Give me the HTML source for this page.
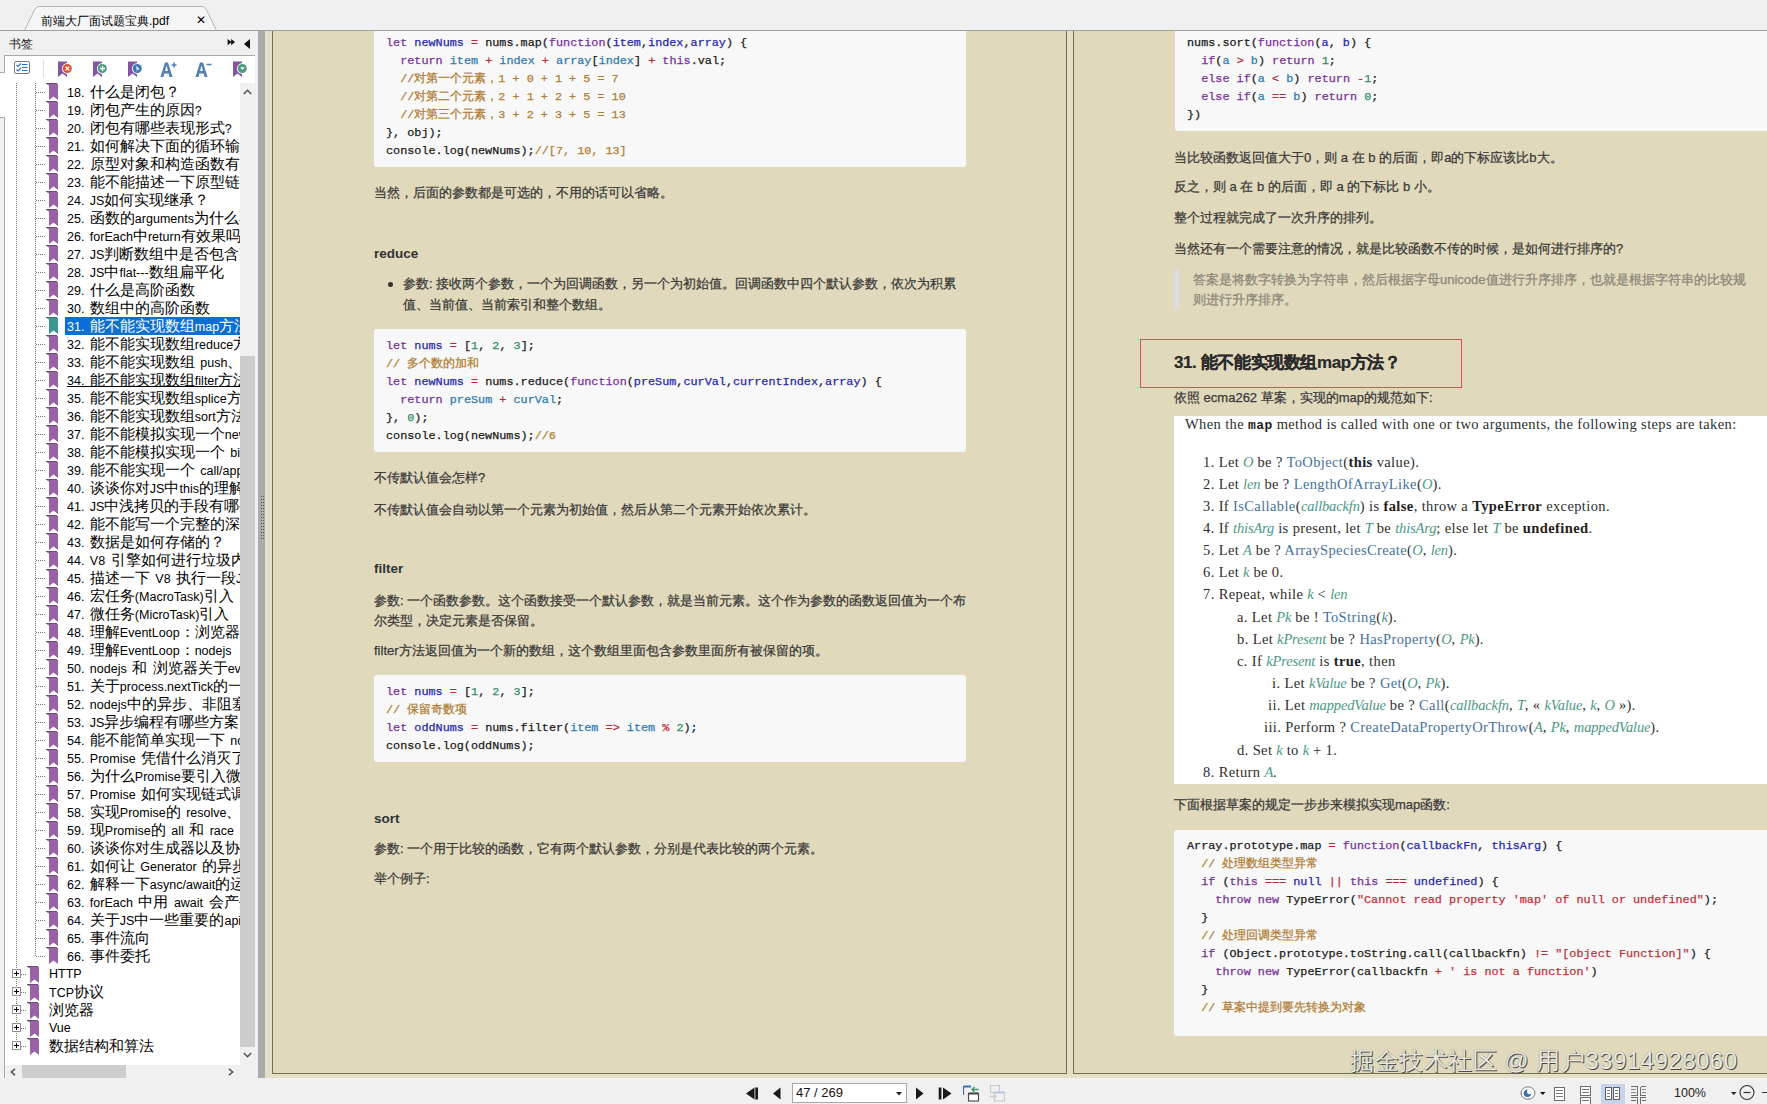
<!DOCTYPE html>
<html><head><meta charset="utf-8">
<style>
*{margin:0;padding:0;box-sizing:border-box}
html,body{width:1767px;height:1104px;overflow:hidden;background:#f0f0f0;font-family:"Liberation Sans",sans-serif;color:#000}
.abs{position:absolute}
#topline{position:absolute;left:0;top:30px;width:1767px;height:1px;background:#a0a0a0}
#tab{position:absolute;left:24px;top:6px;width:193px;height:25px}
#tabtxt{position:absolute;left:41px;top:13px;font-size:12px;color:#000;white-space:nowrap}
#tabx{position:absolute;left:196px;top:13px;font-size:12px}
#left{position:absolute;left:0;top:31px;width:258px;height:1047px;background:#f0f0f0;overflow:hidden}
#splitter{position:absolute;left:258px;top:31px;width:7px;height:1047px;background:#ababab}
#doc{position:absolute;left:265px;top:31px;width:1502px;height:1047px;background:#e4dfc6;overflow:hidden}
#bottom{position:absolute;left:0;top:1078px;width:1767px;height:26px;background:#f0f0f0}
/* panel */
#ptitle{position:absolute;left:9px;top:5px;font-size:12px;color:#222}
#pbox{position:absolute;left:4px;top:24px;width:251px;height:1023px;border-left:1px solid #a9a9a9;border-top:1px solid #a9a9a9;background:#fff}
#ptab{position:absolute;left:0;top:41px;width:5px;height:46px;border-top:1px solid #a9a9a9;border-bottom:1px solid #a9a9a9;background:#fff}
#treearea{position:absolute;left:5px;top:52px;width:235px;height:982px;background:#fff;overflow:hidden}
#tree{position:absolute;left:-5px;top:-83px;width:240px;height:1100px}
.ti{position:absolute;height:18px;line-height:18px;font-size:12.5px;color:#000;white-space:nowrap;padding-left:2px;padding-right:2px;word-spacing:2px}
.ti.sel{background:#0d6fd2;color:#fff;width:200px}
.ti.ul{text-decoration:underline}
.ti .c{font-size:14.8px;letter-spacing:0}
.hd{position:absolute;height:1px;background-image:linear-gradient(to right,#777 50%,transparent 50%);background-size:2px 1px}
.vd{position:absolute;width:1px;background-image:linear-gradient(to bottom,#777 50%,transparent 50%);background-size:1px 2px}
.pb{position:absolute;width:9px;height:9px;border:1px solid #919191;background:#fff}
.pb:before{content:"";position:absolute;left:1px;top:3px;width:5px;height:1px;background:#000}
.pb:after{content:"";position:absolute;left:3px;top:1px;width:1px;height:5px;background:#000}
#vscroll{position:absolute;left:240px;top:52px;width:15px;height:982px;background:#f0f0f0}
#hscroll{position:absolute;left:5px;top:1034px;width:250px;height:13px;background:#f0f0f0}
/* doc */
.page{position:absolute;background:#e0d9bb;border:1px solid #766f52}
.code{position:absolute;background:#f8f8f8;border-radius:3px;font-family:"Liberation Mono",monospace;font-size:11.8px;line-height:18px;color:#1a1a1a;white-space:pre}
.txt{position:absolute;font-size:13px;color:#3a3a3a;white-space:nowrap;line-height:20px}
.hb{font-weight:bold;font-size:13.5px;color:#2a2a2a}
.kw{color:#77309a}.vn{color:#2626b0}.op{color:#b82a3a}.pa{color:#2c78b0}.cm{color:#b07c32}.nu{color:#2e8a6a}.st{color:#c0303a}
.spec{position:absolute;font-family:"Liberation Serif",serif;font-size:14.5px;line-height:22px;color:#2e2e2e;white-space:nowrap;letter-spacing:0.38px}
.spec i{color:#4a9886;font-style:italic;letter-spacing:-0.15px}
.spec a{color:#44729e;text-decoration:none}
.spec b{font-weight:bold;color:#1e1e1e;letter-spacing:0.4px}
.spec .sm{font-family:"Liberation Mono",monospace;font-size:13px}
.wm{position:absolute;font-size:24px;letter-spacing:0.5px;color:#eae8de;white-space:nowrap;line-height:28px;text-shadow:1px 1px 0 #4a4a4a,0 0 1px #777}
.txt,.code{-webkit-text-stroke:0.25px currentColor}
.txt.hb{-webkit-text-stroke:0;color:#333}
</style></head>
<body>
<div id="tab"><svg width="193" height="25" style="position:absolute;left:0;top:0"><path d="M0.5 24.5 L11 3 Q12.5 0.5 15 0.5 L178 0.5 Q180.5 0.5 182 3 L192.5 24.5" fill="#f5f5f5" stroke="#b5b5b5"/></svg></div>
<div id="tabtxt">前端大厂面试题宝典.pdf</div>
<div id="tabx">✕</div>
<div id="topline"></div>
<div id="left">
 <div id="ptitle">书签</div>
 <svg class="abs" style="left:227px;top:8px" width="10" height="7" viewBox="0 0 10 8"><path d="M0 0 L4.5 3.5 L0 7Z M4 0 L8.5 3.5 L4 7Z" fill="#111"/></svg>
 <svg class="abs" style="left:244px;top:8px" width="7" height="10" viewBox="0 0 7 10"><path d="M6 0 L0 5 L6 10Z" fill="#111"/></svg>

 <div id="pbox"></div>
 <div id="ptab"></div>
 <div id="treearea"><div id="tree">
<div class="vd" style="left:35px;top:83px;height:873px"></div>
<div class="vd" style="left:16px;top:83px;height:962px"></div>
<div class="hd" style="left:36px;top:92px;width:10px"></div>
<svg class="abs" style="left:46px;top:83px" width="13" height="17" viewBox="0 0 13 17"><path d="M3 1 H12 V17 L7.5 13.5 L3 17 Z" fill="#9a62a6"/><path d="M0 0.5 H11" stroke="#6f4a7a" stroke-width="1"/><path d="M0.5 0.5 L3 2" stroke="#6f4a7a" stroke-width="1"/></svg>
<div class="ti" style="left:65px;top:83px">18. <span class="c">什么是闭包？</span></div>
<div class="hd" style="left:36px;top:110px;width:10px"></div>
<svg class="abs" style="left:46px;top:101px" width="13" height="17" viewBox="0 0 13 17"><path d="M3 1 H12 V17 L7.5 13.5 L3 17 Z" fill="#9a62a6"/><path d="M0 0.5 H11" stroke="#6f4a7a" stroke-width="1"/><path d="M0.5 0.5 L3 2" stroke="#6f4a7a" stroke-width="1"/></svg>
<div class="ti" style="left:65px;top:101px">19. <span class="c">闭包产生的原因</span>?</div>
<div class="hd" style="left:36px;top:128px;width:10px"></div>
<svg class="abs" style="left:46px;top:119px" width="13" height="17" viewBox="0 0 13 17"><path d="M3 1 H12 V17 L7.5 13.5 L3 17 Z" fill="#9a62a6"/><path d="M0 0.5 H11" stroke="#6f4a7a" stroke-width="1"/><path d="M0.5 0.5 L3 2" stroke="#6f4a7a" stroke-width="1"/></svg>
<div class="ti" style="left:65px;top:119px">20. <span class="c">闭包有哪些表现形式</span>?</div>
<div class="hd" style="left:36px;top:146px;width:10px"></div>
<svg class="abs" style="left:46px;top:137px" width="13" height="17" viewBox="0 0 13 17"><path d="M3 1 H12 V17 L7.5 13.5 L3 17 Z" fill="#9a62a6"/><path d="M0 0.5 H11" stroke="#6f4a7a" stroke-width="1"/><path d="M0.5 0.5 L3 2" stroke="#6f4a7a" stroke-width="1"/></svg>
<div class="ti" style="left:65px;top:137px">21. <span class="c">如何解决下面的循环输出问题？</span></div>
<div class="hd" style="left:36px;top:164px;width:10px"></div>
<svg class="abs" style="left:46px;top:155px" width="13" height="17" viewBox="0 0 13 17"><path d="M3 1 H12 V17 L7.5 13.5 L3 17 Z" fill="#9a62a6"/><path d="M0 0.5 H11" stroke="#6f4a7a" stroke-width="1"/><path d="M0.5 0.5 L3 2" stroke="#6f4a7a" stroke-width="1"/></svg>
<div class="ti" style="left:65px;top:155px">22. <span class="c">原型对象和构造函数有何关系？</span></div>
<div class="hd" style="left:36px;top:182px;width:10px"></div>
<svg class="abs" style="left:46px;top:173px" width="13" height="17" viewBox="0 0 13 17"><path d="M3 1 H12 V17 L7.5 13.5 L3 17 Z" fill="#9a62a6"/><path d="M0 0.5 H11" stroke="#6f4a7a" stroke-width="1"/><path d="M0.5 0.5 L3 2" stroke="#6f4a7a" stroke-width="1"/></svg>
<div class="ti" style="left:65px;top:173px">23. <span class="c">能不能描述一下原型链？</span></div>
<div class="hd" style="left:36px;top:200px;width:10px"></div>
<svg class="abs" style="left:46px;top:191px" width="13" height="17" viewBox="0 0 13 17"><path d="M3 1 H12 V17 L7.5 13.5 L3 17 Z" fill="#9a62a6"/><path d="M0 0.5 H11" stroke="#6f4a7a" stroke-width="1"/><path d="M0.5 0.5 L3 2" stroke="#6f4a7a" stroke-width="1"/></svg>
<div class="ti" style="left:65px;top:191px">24. JS<span class="c">如何实现继承？</span></div>
<div class="hd" style="left:36px;top:218px;width:10px"></div>
<svg class="abs" style="left:46px;top:209px" width="13" height="17" viewBox="0 0 13 17"><path d="M3 1 H12 V17 L7.5 13.5 L3 17 Z" fill="#9a62a6"/><path d="M0 0.5 H11" stroke="#6f4a7a" stroke-width="1"/><path d="M0.5 0.5 L3 2" stroke="#6f4a7a" stroke-width="1"/></svg>
<div class="ti" style="left:65px;top:209px">25. <span class="c">函数的</span>arguments<span class="c">为什么不是数组？</span></div>
<div class="hd" style="left:36px;top:236px;width:10px"></div>
<svg class="abs" style="left:46px;top:227px" width="13" height="17" viewBox="0 0 13 17"><path d="M3 1 H12 V17 L7.5 13.5 L3 17 Z" fill="#9a62a6"/><path d="M0 0.5 H11" stroke="#6f4a7a" stroke-width="1"/><path d="M0.5 0.5 L3 2" stroke="#6f4a7a" stroke-width="1"/></svg>
<div class="ti" style="left:65px;top:227px">26. forEach<span class="c">中</span>return<span class="c">有效果吗？</span></div>
<div class="hd" style="left:36px;top:254px;width:10px"></div>
<svg class="abs" style="left:46px;top:245px" width="13" height="17" viewBox="0 0 13 17"><path d="M3 1 H12 V17 L7.5 13.5 L3 17 Z" fill="#9a62a6"/><path d="M0 0.5 H11" stroke="#6f4a7a" stroke-width="1"/><path d="M0.5 0.5 L3 2" stroke="#6f4a7a" stroke-width="1"/></svg>
<div class="ti" style="left:65px;top:245px">27. JS<span class="c">判断数组中是否包含某个值</span></div>
<div class="hd" style="left:36px;top:272px;width:10px"></div>
<svg class="abs" style="left:46px;top:263px" width="13" height="17" viewBox="0 0 13 17"><path d="M3 1 H12 V17 L7.5 13.5 L3 17 Z" fill="#9a62a6"/><path d="M0 0.5 H11" stroke="#6f4a7a" stroke-width="1"/><path d="M0.5 0.5 L3 2" stroke="#6f4a7a" stroke-width="1"/></svg>
<div class="ti" style="left:65px;top:263px">28. JS<span class="c">中</span>flat---<span class="c">数组扁平化</span></div>
<div class="hd" style="left:36px;top:290px;width:10px"></div>
<svg class="abs" style="left:46px;top:281px" width="13" height="17" viewBox="0 0 13 17"><path d="M3 1 H12 V17 L7.5 13.5 L3 17 Z" fill="#9a62a6"/><path d="M0 0.5 H11" stroke="#6f4a7a" stroke-width="1"/><path d="M0.5 0.5 L3 2" stroke="#6f4a7a" stroke-width="1"/></svg>
<div class="ti" style="left:65px;top:281px">29. <span class="c">什么是高阶函数</span></div>
<div class="hd" style="left:36px;top:308px;width:10px"></div>
<svg class="abs" style="left:46px;top:299px" width="13" height="17" viewBox="0 0 13 17"><path d="M3 1 H12 V17 L7.5 13.5 L3 17 Z" fill="#9a62a6"/><path d="M0 0.5 H11" stroke="#6f4a7a" stroke-width="1"/><path d="M0.5 0.5 L3 2" stroke="#6f4a7a" stroke-width="1"/></svg>
<div class="ti" style="left:65px;top:299px">30. <span class="c">数组中的高阶函数</span></div>
<div class="hd" style="left:36px;top:326px;width:10px"></div>
<svg class="abs" style="left:46px;top:317px" width="13" height="17" viewBox="0 0 13 17"><path d="M3 1 H12 V17 L7.5 13.5 L3 17 Z" fill="#3a9890"/><path d="M0 0.5 H11" stroke="#2b7a72" stroke-width="1"/><path d="M0.5 0.5 L3 2" stroke="#2b7a72" stroke-width="1"/></svg>
<div class="ti sel" style="left:65px;top:317px">31. <span class="c">能不能实现数组</span>map<span class="c">方法？</span></div>
<div class="hd" style="left:36px;top:344px;width:10px"></div>
<svg class="abs" style="left:46px;top:335px" width="13" height="17" viewBox="0 0 13 17"><path d="M3 1 H12 V17 L7.5 13.5 L3 17 Z" fill="#9a62a6"/><path d="M0 0.5 H11" stroke="#6f4a7a" stroke-width="1"/><path d="M0.5 0.5 L3 2" stroke="#6f4a7a" stroke-width="1"/></svg>
<div class="ti" style="left:65px;top:335px">32. <span class="c">能不能实现数组</span>reduce<span class="c">方法？</span></div>
<div class="hd" style="left:36px;top:362px;width:10px"></div>
<svg class="abs" style="left:46px;top:353px" width="13" height="17" viewBox="0 0 13 17"><path d="M3 1 H12 V17 L7.5 13.5 L3 17 Z" fill="#9a62a6"/><path d="M0 0.5 H11" stroke="#6f4a7a" stroke-width="1"/><path d="M0.5 0.5 L3 2" stroke="#6f4a7a" stroke-width="1"/></svg>
<div class="ti" style="left:65px;top:353px">33. <span class="c">能不能实现数组</span> push<span class="c">、</span>pop <span class="c">方法？</span></div>
<div class="hd" style="left:36px;top:380px;width:10px"></div>
<svg class="abs" style="left:46px;top:371px" width="13" height="17" viewBox="0 0 13 17"><path d="M3 1 H12 V17 L7.5 13.5 L3 17 Z" fill="#9a62a6"/><path d="M0 0.5 H11" stroke="#6f4a7a" stroke-width="1"/><path d="M0.5 0.5 L3 2" stroke="#6f4a7a" stroke-width="1"/></svg>
<div class="ti ul" style="left:65px;top:371px">34. <span class="c">能不能实现数组</span>filter<span class="c">方法？</span></div>
<div class="hd" style="left:36px;top:398px;width:10px"></div>
<svg class="abs" style="left:46px;top:389px" width="13" height="17" viewBox="0 0 13 17"><path d="M3 1 H12 V17 L7.5 13.5 L3 17 Z" fill="#9a62a6"/><path d="M0 0.5 H11" stroke="#6f4a7a" stroke-width="1"/><path d="M0.5 0.5 L3 2" stroke="#6f4a7a" stroke-width="1"/></svg>
<div class="ti" style="left:65px;top:389px">35. <span class="c">能不能实现数组</span>splice<span class="c">方法？</span></div>
<div class="hd" style="left:36px;top:416px;width:10px"></div>
<svg class="abs" style="left:46px;top:407px" width="13" height="17" viewBox="0 0 13 17"><path d="M3 1 H12 V17 L7.5 13.5 L3 17 Z" fill="#9a62a6"/><path d="M0 0.5 H11" stroke="#6f4a7a" stroke-width="1"/><path d="M0.5 0.5 L3 2" stroke="#6f4a7a" stroke-width="1"/></svg>
<div class="ti" style="left:65px;top:407px">36. <span class="c">能不能实现数组</span>sort<span class="c">方法？</span></div>
<div class="hd" style="left:36px;top:434px;width:10px"></div>
<svg class="abs" style="left:46px;top:425px" width="13" height="17" viewBox="0 0 13 17"><path d="M3 1 H12 V17 L7.5 13.5 L3 17 Z" fill="#9a62a6"/><path d="M0 0.5 H11" stroke="#6f4a7a" stroke-width="1"/><path d="M0.5 0.5 L3 2" stroke="#6f4a7a" stroke-width="1"/></svg>
<div class="ti" style="left:65px;top:425px">37. <span class="c">能不能模拟实现一个</span>new<span class="c">的效果？</span></div>
<div class="hd" style="left:36px;top:452px;width:10px"></div>
<svg class="abs" style="left:46px;top:443px" width="13" height="17" viewBox="0 0 13 17"><path d="M3 1 H12 V17 L7.5 13.5 L3 17 Z" fill="#9a62a6"/><path d="M0 0.5 H11" stroke="#6f4a7a" stroke-width="1"/><path d="M0.5 0.5 L3 2" stroke="#6f4a7a" stroke-width="1"/></svg>
<div class="ti" style="left:65px;top:443px">38. <span class="c">能不能模拟实现一个</span> bind <span class="c">的效果？</span></div>
<div class="hd" style="left:36px;top:470px;width:10px"></div>
<svg class="abs" style="left:46px;top:461px" width="13" height="17" viewBox="0 0 13 17"><path d="M3 1 H12 V17 L7.5 13.5 L3 17 Z" fill="#9a62a6"/><path d="M0 0.5 H11" stroke="#6f4a7a" stroke-width="1"/><path d="M0.5 0.5 L3 2" stroke="#6f4a7a" stroke-width="1"/></svg>
<div class="ti" style="left:65px;top:461px">39. <span class="c">能不能实现一个</span> call/apply <span class="c">函数？</span></div>
<div class="hd" style="left:36px;top:488px;width:10px"></div>
<svg class="abs" style="left:46px;top:479px" width="13" height="17" viewBox="0 0 13 17"><path d="M3 1 H12 V17 L7.5 13.5 L3 17 Z" fill="#9a62a6"/><path d="M0 0.5 H11" stroke="#6f4a7a" stroke-width="1"/><path d="M0.5 0.5 L3 2" stroke="#6f4a7a" stroke-width="1"/></svg>
<div class="ti" style="left:65px;top:479px">40. <span class="c">谈谈你对</span>JS<span class="c">中</span>this<span class="c">的理解</span></div>
<div class="hd" style="left:36px;top:506px;width:10px"></div>
<svg class="abs" style="left:46px;top:497px" width="13" height="17" viewBox="0 0 13 17"><path d="M3 1 H12 V17 L7.5 13.5 L3 17 Z" fill="#9a62a6"/><path d="M0 0.5 H11" stroke="#6f4a7a" stroke-width="1"/><path d="M0.5 0.5 L3 2" stroke="#6f4a7a" stroke-width="1"/></svg>
<div class="ti" style="left:65px;top:497px">41. JS<span class="c">中浅拷贝的手段有哪些？</span></div>
<div class="hd" style="left:36px;top:524px;width:10px"></div>
<svg class="abs" style="left:46px;top:515px" width="13" height="17" viewBox="0 0 13 17"><path d="M3 1 H12 V17 L7.5 13.5 L3 17 Z" fill="#9a62a6"/><path d="M0 0.5 H11" stroke="#6f4a7a" stroke-width="1"/><path d="M0.5 0.5 L3 2" stroke="#6f4a7a" stroke-width="1"/></svg>
<div class="ti" style="left:65px;top:515px">42. <span class="c">能不能写一个完整的深拷贝？</span></div>
<div class="hd" style="left:36px;top:542px;width:10px"></div>
<svg class="abs" style="left:46px;top:533px" width="13" height="17" viewBox="0 0 13 17"><path d="M3 1 H12 V17 L7.5 13.5 L3 17 Z" fill="#9a62a6"/><path d="M0 0.5 H11" stroke="#6f4a7a" stroke-width="1"/><path d="M0.5 0.5 L3 2" stroke="#6f4a7a" stroke-width="1"/></svg>
<div class="ti" style="left:65px;top:533px">43. <span class="c">数据是如何存储的？</span></div>
<div class="hd" style="left:36px;top:560px;width:10px"></div>
<svg class="abs" style="left:46px;top:551px" width="13" height="17" viewBox="0 0 13 17"><path d="M3 1 H12 V17 L7.5 13.5 L3 17 Z" fill="#9a62a6"/><path d="M0 0.5 H11" stroke="#6f4a7a" stroke-width="1"/><path d="M0.5 0.5 L3 2" stroke="#6f4a7a" stroke-width="1"/></svg>
<div class="ti" style="left:65px;top:551px">44. V8 <span class="c">引擎如何进行垃圾内存的回收？</span></div>
<div class="hd" style="left:36px;top:578px;width:10px"></div>
<svg class="abs" style="left:46px;top:569px" width="13" height="17" viewBox="0 0 13 17"><path d="M3 1 H12 V17 L7.5 13.5 L3 17 Z" fill="#9a62a6"/><path d="M0 0.5 H11" stroke="#6f4a7a" stroke-width="1"/><path d="M0.5 0.5 L3 2" stroke="#6f4a7a" stroke-width="1"/></svg>
<div class="ti" style="left:65px;top:569px">45. <span class="c">描述一下</span> V8 <span class="c">执行一段</span>JS<span class="c">代码的过程？</span></div>
<div class="hd" style="left:36px;top:596px;width:10px"></div>
<svg class="abs" style="left:46px;top:587px" width="13" height="17" viewBox="0 0 13 17"><path d="M3 1 H12 V17 L7.5 13.5 L3 17 Z" fill="#9a62a6"/><path d="M0 0.5 H11" stroke="#6f4a7a" stroke-width="1"/><path d="M0.5 0.5 L3 2" stroke="#6f4a7a" stroke-width="1"/></svg>
<div class="ti" style="left:65px;top:587px">46. <span class="c">宏任务</span>(MacroTask)<span class="c">引入</span></div>
<div class="hd" style="left:36px;top:614px;width:10px"></div>
<svg class="abs" style="left:46px;top:605px" width="13" height="17" viewBox="0 0 13 17"><path d="M3 1 H12 V17 L7.5 13.5 L3 17 Z" fill="#9a62a6"/><path d="M0 0.5 H11" stroke="#6f4a7a" stroke-width="1"/><path d="M0.5 0.5 L3 2" stroke="#6f4a7a" stroke-width="1"/></svg>
<div class="ti" style="left:65px;top:605px">47. <span class="c">微任务</span>(MicroTask)<span class="c">引入</span></div>
<div class="hd" style="left:36px;top:632px;width:10px"></div>
<svg class="abs" style="left:46px;top:623px" width="13" height="17" viewBox="0 0 13 17"><path d="M3 1 H12 V17 L7.5 13.5 L3 17 Z" fill="#9a62a6"/><path d="M0 0.5 H11" stroke="#6f4a7a" stroke-width="1"/><path d="M0.5 0.5 L3 2" stroke="#6f4a7a" stroke-width="1"/></svg>
<div class="ti" style="left:65px;top:623px">48. <span class="c">理解</span>EventLoop<span class="c">：浏览器</span></div>
<div class="hd" style="left:36px;top:650px;width:10px"></div>
<svg class="abs" style="left:46px;top:641px" width="13" height="17" viewBox="0 0 13 17"><path d="M3 1 H12 V17 L7.5 13.5 L3 17 Z" fill="#9a62a6"/><path d="M0 0.5 H11" stroke="#6f4a7a" stroke-width="1"/><path d="M0.5 0.5 L3 2" stroke="#6f4a7a" stroke-width="1"/></svg>
<div class="ti" style="left:65px;top:641px">49. <span class="c">理解</span>EventLoop<span class="c">：</span>nodejs</div>
<div class="hd" style="left:36px;top:668px;width:10px"></div>
<svg class="abs" style="left:46px;top:659px" width="13" height="17" viewBox="0 0 13 17"><path d="M3 1 H12 V17 L7.5 13.5 L3 17 Z" fill="#9a62a6"/><path d="M0 0.5 H11" stroke="#6f4a7a" stroke-width="1"/><path d="M0.5 0.5 L3 2" stroke="#6f4a7a" stroke-width="1"/></svg>
<div class="ti" style="left:65px;top:659px">50. nodejs <span class="c">和</span> <span class="c">浏览器关于</span>eventLoop<span class="c">的主要区别</span></div>
<div class="hd" style="left:36px;top:686px;width:10px"></div>
<svg class="abs" style="left:46px;top:677px" width="13" height="17" viewBox="0 0 13 17"><path d="M3 1 H12 V17 L7.5 13.5 L3 17 Z" fill="#9a62a6"/><path d="M0 0.5 H11" stroke="#6f4a7a" stroke-width="1"/><path d="M0.5 0.5 L3 2" stroke="#6f4a7a" stroke-width="1"/></svg>
<div class="ti" style="left:65px;top:677px">51. <span class="c">关于</span>process.nextTick<span class="c">的一点说明</span></div>
<div class="hd" style="left:36px;top:704px;width:10px"></div>
<svg class="abs" style="left:46px;top:695px" width="13" height="17" viewBox="0 0 13 17"><path d="M3 1 H12 V17 L7.5 13.5 L3 17 Z" fill="#9a62a6"/><path d="M0 0.5 H11" stroke="#6f4a7a" stroke-width="1"/><path d="M0.5 0.5 L3 2" stroke="#6f4a7a" stroke-width="1"/></svg>
<div class="ti" style="left:65px;top:695px">52. nodejs<span class="c">中的异步、非阻塞</span>I/O<span class="c">是如何实现的？</span></div>
<div class="hd" style="left:36px;top:722px;width:10px"></div>
<svg class="abs" style="left:46px;top:713px" width="13" height="17" viewBox="0 0 13 17"><path d="M3 1 H12 V17 L7.5 13.5 L3 17 Z" fill="#9a62a6"/><path d="M0 0.5 H11" stroke="#6f4a7a" stroke-width="1"/><path d="M0.5 0.5 L3 2" stroke="#6f4a7a" stroke-width="1"/></svg>
<div class="ti" style="left:65px;top:713px">53. JS<span class="c">异步编程有哪些方案？为什么会出现这些方案？</span></div>
<div class="hd" style="left:36px;top:740px;width:10px"></div>
<svg class="abs" style="left:46px;top:731px" width="13" height="17" viewBox="0 0 13 17"><path d="M3 1 H12 V17 L7.5 13.5 L3 17 Z" fill="#9a62a6"/><path d="M0 0.5 H11" stroke="#6f4a7a" stroke-width="1"/><path d="M0.5 0.5 L3 2" stroke="#6f4a7a" stroke-width="1"/></svg>
<div class="ti" style="left:65px;top:731px">54. <span class="c">能不能简单实现一下</span> node <span class="c">中回调函数的机制？</span></div>
<div class="hd" style="left:36px;top:758px;width:10px"></div>
<svg class="abs" style="left:46px;top:749px" width="13" height="17" viewBox="0 0 13 17"><path d="M3 1 H12 V17 L7.5 13.5 L3 17 Z" fill="#9a62a6"/><path d="M0 0.5 H11" stroke="#6f4a7a" stroke-width="1"/><path d="M0.5 0.5 L3 2" stroke="#6f4a7a" stroke-width="1"/></svg>
<div class="ti" style="left:65px;top:749px">55. Promise <span class="c">凭借什么消灭了回调地狱？</span></div>
<div class="hd" style="left:36px;top:776px;width:10px"></div>
<svg class="abs" style="left:46px;top:767px" width="13" height="17" viewBox="0 0 13 17"><path d="M3 1 H12 V17 L7.5 13.5 L3 17 Z" fill="#9a62a6"/><path d="M0 0.5 H11" stroke="#6f4a7a" stroke-width="1"/><path d="M0.5 0.5 L3 2" stroke="#6f4a7a" stroke-width="1"/></svg>
<div class="ti" style="left:65px;top:767px">56. <span class="c">为什么</span>Promise<span class="c">要引入微任务？</span></div>
<div class="hd" style="left:36px;top:794px;width:10px"></div>
<svg class="abs" style="left:46px;top:785px" width="13" height="17" viewBox="0 0 13 17"><path d="M3 1 H12 V17 L7.5 13.5 L3 17 Z" fill="#9a62a6"/><path d="M0 0.5 H11" stroke="#6f4a7a" stroke-width="1"/><path d="M0.5 0.5 L3 2" stroke="#6f4a7a" stroke-width="1"/></svg>
<div class="ti" style="left:65px;top:785px">57. Promise <span class="c">如何实现链式调用？</span></div>
<div class="hd" style="left:36px;top:812px;width:10px"></div>
<svg class="abs" style="left:46px;top:803px" width="13" height="17" viewBox="0 0 13 17"><path d="M3 1 H12 V17 L7.5 13.5 L3 17 Z" fill="#9a62a6"/><path d="M0 0.5 H11" stroke="#6f4a7a" stroke-width="1"/><path d="M0.5 0.5 L3 2" stroke="#6f4a7a" stroke-width="1"/></svg>
<div class="ti" style="left:65px;top:803px">58. <span class="c">实现</span>Promise<span class="c">的</span> resolve<span class="c">、</span>reject <span class="c">和</span> finally</div>
<div class="hd" style="left:36px;top:830px;width:10px"></div>
<svg class="abs" style="left:46px;top:821px" width="13" height="17" viewBox="0 0 13 17"><path d="M3 1 H12 V17 L7.5 13.5 L3 17 Z" fill="#9a62a6"/><path d="M0 0.5 H11" stroke="#6f4a7a" stroke-width="1"/><path d="M0.5 0.5 L3 2" stroke="#6f4a7a" stroke-width="1"/></svg>
<div class="ti" style="left:65px;top:821px">59. <span class="c">现</span>Promise<span class="c">的</span> all <span class="c">和</span> race</div>
<div class="hd" style="left:36px;top:848px;width:10px"></div>
<svg class="abs" style="left:46px;top:839px" width="13" height="17" viewBox="0 0 13 17"><path d="M3 1 H12 V17 L7.5 13.5 L3 17 Z" fill="#9a62a6"/><path d="M0 0.5 H11" stroke="#6f4a7a" stroke-width="1"/><path d="M0.5 0.5 L3 2" stroke="#6f4a7a" stroke-width="1"/></svg>
<div class="ti" style="left:65px;top:839px">60. <span class="c">谈谈你对生成器以及协程的理解</span></div>
<div class="hd" style="left:36px;top:866px;width:10px"></div>
<svg class="abs" style="left:46px;top:857px" width="13" height="17" viewBox="0 0 13 17"><path d="M3 1 H12 V17 L7.5 13.5 L3 17 Z" fill="#9a62a6"/><path d="M0 0.5 H11" stroke="#6f4a7a" stroke-width="1"/><path d="M0.5 0.5 L3 2" stroke="#6f4a7a" stroke-width="1"/></svg>
<div class="ti" style="left:65px;top:857px">61. <span class="c">如何让</span> Generator <span class="c">的异步代码按顺序执行完毕？</span></div>
<div class="hd" style="left:36px;top:884px;width:10px"></div>
<svg class="abs" style="left:46px;top:875px" width="13" height="17" viewBox="0 0 13 17"><path d="M3 1 H12 V17 L7.5 13.5 L3 17 Z" fill="#9a62a6"/><path d="M0 0.5 H11" stroke="#6f4a7a" stroke-width="1"/><path d="M0.5 0.5 L3 2" stroke="#6f4a7a" stroke-width="1"/></svg>
<div class="ti" style="left:65px;top:875px">62. <span class="c">解释一下</span>async/await<span class="c">的运行机制</span></div>
<div class="hd" style="left:36px;top:902px;width:10px"></div>
<svg class="abs" style="left:46px;top:893px" width="13" height="17" viewBox="0 0 13 17"><path d="M3 1 H12 V17 L7.5 13.5 L3 17 Z" fill="#9a62a6"/><path d="M0 0.5 H11" stroke="#6f4a7a" stroke-width="1"/><path d="M0.5 0.5 L3 2" stroke="#6f4a7a" stroke-width="1"/></svg>
<div class="ti" style="left:65px;top:893px">63. forEach <span class="c">中用</span> await <span class="c">会产生什么问题？怎么解决这个问题？</span></div>
<div class="hd" style="left:36px;top:920px;width:10px"></div>
<svg class="abs" style="left:46px;top:911px" width="13" height="17" viewBox="0 0 13 17"><path d="M3 1 H12 V17 L7.5 13.5 L3 17 Z" fill="#9a62a6"/><path d="M0 0.5 H11" stroke="#6f4a7a" stroke-width="1"/><path d="M0.5 0.5 L3 2" stroke="#6f4a7a" stroke-width="1"/></svg>
<div class="ti" style="left:65px;top:911px">64. <span class="c">关于</span>JS<span class="c">中一些重要的</span>api<span class="c">实现</span></div>
<div class="hd" style="left:36px;top:938px;width:10px"></div>
<svg class="abs" style="left:46px;top:929px" width="13" height="17" viewBox="0 0 13 17"><path d="M3 1 H12 V17 L7.5 13.5 L3 17 Z" fill="#9a62a6"/><path d="M0 0.5 H11" stroke="#6f4a7a" stroke-width="1"/><path d="M0.5 0.5 L3 2" stroke="#6f4a7a" stroke-width="1"/></svg>
<div class="ti" style="left:65px;top:929px">65. <span class="c">事件流向</span></div>
<div class="hd" style="left:36px;top:956px;width:10px"></div>
<svg class="abs" style="left:46px;top:947px" width="13" height="17" viewBox="0 0 13 17"><path d="M3 1 H12 V17 L7.5 13.5 L3 17 Z" fill="#9a62a6"/><path d="M0 0.5 H11" stroke="#6f4a7a" stroke-width="1"/><path d="M0.5 0.5 L3 2" stroke="#6f4a7a" stroke-width="1"/></svg>
<div class="ti" style="left:65px;top:947px">66. <span class="c">事件委托</span></div>
<div class="pb" style="left:12px;top:969px"></div>
<div class="hd" style="left:21px;top:974px;width:6px"></div>
<svg class="abs" style="left:27px;top:966px" width="13" height="17" viewBox="0 0 13 17"><path d="M3 1 H12 V17 L7.5 13.5 L3 17 Z" fill="#9a62a6"/><path d="M0 0.5 H11" stroke="#6f4a7a" stroke-width="1"/><path d="M0.5 0.5 L3 2" stroke="#6f4a7a" stroke-width="1"/></svg>
<div class="ti" style="left:47px;top:965px">HTTP</div>
<div class="pb" style="left:12px;top:987px"></div>
<div class="hd" style="left:21px;top:992px;width:6px"></div>
<svg class="abs" style="left:27px;top:984px" width="13" height="17" viewBox="0 0 13 17"><path d="M3 1 H12 V17 L7.5 13.5 L3 17 Z" fill="#9a62a6"/><path d="M0 0.5 H11" stroke="#6f4a7a" stroke-width="1"/><path d="M0.5 0.5 L3 2" stroke="#6f4a7a" stroke-width="1"/></svg>
<div class="ti" style="left:47px;top:983px">TCP<span class="c">协议</span></div>
<div class="pb" style="left:12px;top:1005px"></div>
<div class="hd" style="left:21px;top:1010px;width:6px"></div>
<svg class="abs" style="left:27px;top:1002px" width="13" height="17" viewBox="0 0 13 17"><path d="M3 1 H12 V17 L7.5 13.5 L3 17 Z" fill="#9a62a6"/><path d="M0 0.5 H11" stroke="#6f4a7a" stroke-width="1"/><path d="M0.5 0.5 L3 2" stroke="#6f4a7a" stroke-width="1"/></svg>
<div class="ti" style="left:47px;top:1001px"><span class="c">浏览器</span></div>
<div class="pb" style="left:12px;top:1023px"></div>
<div class="hd" style="left:21px;top:1028px;width:6px"></div>
<svg class="abs" style="left:27px;top:1020px" width="13" height="17" viewBox="0 0 13 17"><path d="M3 1 H12 V17 L7.5 13.5 L3 17 Z" fill="#9a62a6"/><path d="M0 0.5 H11" stroke="#6f4a7a" stroke-width="1"/><path d="M0.5 0.5 L3 2" stroke="#6f4a7a" stroke-width="1"/></svg>
<div class="ti" style="left:47px;top:1019px">Vue</div>
<div class="pb" style="left:12px;top:1041px"></div>
<div class="hd" style="left:21px;top:1046px;width:6px"></div>
<svg class="abs" style="left:27px;top:1038px" width="13" height="17" viewBox="0 0 13 17"><path d="M3 1 H12 V17 L7.5 13.5 L3 17 Z" fill="#9a62a6"/><path d="M0 0.5 H11" stroke="#6f4a7a" stroke-width="1"/><path d="M0.5 0.5 L3 2" stroke="#6f4a7a" stroke-width="1"/></svg>
<div class="ti" style="left:47px;top:1037px"><span class="c">数据结构和算法</span></div>
 </div></div>
 <div id="vscroll"></div>
 <div id="hscroll"></div>
 <svg class="abs" style="left:14px;top:30px" width="17" height="14" viewBox="0 0 17 14">
  <rect x="0.5" y="0.5" width="15" height="12" rx="1.5" fill="#fff" stroke="#7a7a7a"/>
  <path d="M2.5 4 L4 5.5 L7 2.5 M2.5 8.5 L4 10 L7 7" stroke="#2f6fb5" stroke-width="1.1" fill="none"/>
  <path d="M8 3.5 H13.5 M8 6.5 H13.5 M8 9.5 H13.5" stroke="#2f6fb5" stroke-width="1.1"/>
 </svg>
 <div class="abs" style="left:43px;top:29px;width:1px;height:18px;background:#e0e0e0"></div>
 <!-- bookmark tool icons -->
 <svg class="abs" style="left:57px;top:30px" width="16" height="17" viewBox="0 0 16 17">
  <path d="M1 0.5 H10 V16 L5.5 12.5 L1 16Z" fill="#8455a2"/>
  <circle cx="10.3" cy="7.5" r="5.4" fill="#fff"/><circle cx="10.3" cy="7.5" r="4.5" fill="#d8553c"/>
  <path d="M8.6 5.6 L12.4 9.4 M12.4 5.6 L8.6 9.4" stroke="#fff" stroke-width="1.3"/>
 </svg>
 <svg class="abs" style="left:92px;top:30px" width="16" height="17" viewBox="0 0 16 17">
  <path d="M1 0.5 H10 V16 L5.5 12.5 L1 16Z" fill="#8455a2"/>
  <circle cx="10.3" cy="7.5" r="5.4" fill="#fff"/><circle cx="10.3" cy="7.5" r="4.5" fill="#4f9a80"/>
  <path d="M8 7.5 H13 M10.5 5 V10" stroke="#fff" stroke-width="1.3"/>
 </svg>
 <svg class="abs" style="left:127px;top:30px" width="16" height="17" viewBox="0 0 16 17">
  <path d="M1 0.5 H10 V16 L5.5 12.5 L1 16Z" fill="#8455a2"/>
  <circle cx="10.3" cy="7.5" r="5.4" fill="#fff"/><circle cx="10.3" cy="7.5" r="4.5" fill="#3f78b8"/>
  <path d="M9.3 4.8 L12.8 8.6 L10.6 8.3 L9.8 10.8Z" fill="#fff"/>
 </svg>
 <svg class="abs" style="left:160px;top:30px" width="18" height="17" viewBox="0 0 18 17">
  <path d="M0.5 16 L5 1.5 H8 L12.5 16 H9.5 L8.6 12.5 H4.4 L3.5 16Z M5 10 H8 L6.5 4.5Z" fill="#4f80b4"/>
  <path d="M11.5 4 H16.5 M14 1.5 V6.5" stroke="#4f80b4" stroke-width="1.5"/>
 </svg>
 <svg class="abs" style="left:195px;top:30px" width="18" height="17" viewBox="0 0 18 17">
  <path d="M0.5 16 L5 1.5 H8 L12.5 16 H9.5 L8.6 12.5 H4.4 L3.5 16Z M5 10 H8 L6.5 4.5Z" fill="#4f80b4"/>
  <path d="M11.5 3.5 H16.5" stroke="#4f80b4" stroke-width="1.5"/>
 </svg>
 <svg class="abs" style="left:232px;top:30px" width="16" height="17" viewBox="0 0 16 17">
  <path d="M1 0.5 H10 V16 L5.5 12.5 L1 16Z" fill="#8455a2"/>
  <circle cx="10.3" cy="7.5" r="5.4" fill="#fff"/><circle cx="10.3" cy="7.5" r="4.5" fill="#4f9a80"/>
  <path d="M8.3 6.3 H12.7 L10.5 9Z" fill="#fff"/>
 </svg>
 <!-- scrollbars -->
 <svg class="abs" style="left:243px;top:58px" width="9" height="6" viewBox="0 0 9 6"><path d="M0.8 5 L4.5 1.3 L8.2 5" stroke="#555" stroke-width="1.6" fill="none"/></svg>
 <div class="abs" style="left:240px;top:325px;width:15px;height:691px;background:#cdcdcd"></div>
 <svg class="abs" style="left:243px;top:1021px" width="9" height="6" viewBox="0 0 9 6"><path d="M0.8 1 L4.5 4.7 L8.2 1" stroke="#555" stroke-width="1.6" fill="none"/></svg>
 <div class="abs" style="left:22px;top:1034px;width:104px;height:13px;background:#cdcdcd"></div>
 <svg class="abs" style="left:10px;top:1037px" width="6" height="8" viewBox="0 0 6 8"><path d="M5 0.8 L1.3 4 L5 7.2" stroke="#555" stroke-width="1.6" fill="none"/></svg>
 <svg class="abs" style="left:228px;top:1037px" width="6" height="8" viewBox="0 0 6 8"><path d="M1 0.8 L4.7 4 L1 7.2" stroke="#555" stroke-width="1.6" fill="none"/></svg>

</div>
<div id="splitter"><svg class="abs" style="left:3px;top:465px" width="4" height="44"><defs><pattern id="gp" width="2" height="3" patternUnits="userSpaceOnUse"><rect width="1" height="1" fill="#555"/></pattern></defs><rect width="4" height="44" fill="url(#gp)"/></svg></div>
<div id="doc">
 <div class="page" style="left:7px;top:-20px;width:795px;height:1063px"></div>
 <div class="page" style="left:808px;top:-20px;width:800px;height:1063px"></div>
<!-- page 1 content; coords relative to doc (265,31) -->
<div class="code" style="left:109px;top:-10px;width:592px;height:146px;padding:13px 0 0 12px"><span class="kw">let</span> <span class="vn">newNums</span> <span class="op">=</span> nums.map(<span class="kw">function</span>(<span class="vn">item</span>,<span class="vn">index</span>,<span class="vn">array</span>) {
  <span class="kw">return</span> <span class="pa">item</span> <span class="op">+</span> <span class="pa">index</span> <span class="op">+</span> <span class="pa">array</span>[<span class="pa">index</span>] <span class="op">+</span> <span class="kw">this</span>.val;
  <span class="cm">//对第一个元素，1 + 0 + 1 + 5 = 7</span>
  <span class="cm">//对第二个元素，2 + 1 + 2 + 5 = 10</span>
  <span class="cm">//对第三个元素，3 + 2 + 3 + 5 = 13</span>
}, obj);
console.log(newNums);<span class="cm">//[7, 10, 13]</span></div>
<div class="txt" style="left:109px;top:152px">当然，后面的参数都是可选的，不用的话可以省略。</div>
<div class="txt hb" style="left:109px;top:213px">reduce</div>
<div class="abs" style="left:123px;top:251px;width:5px;height:5px;border-radius:50%;background:#333"></div>
<div class="txt" style="left:138px;top:243px;line-height:20.5px">参数: 接收两个参数，一个为回调函数，另一个为初始值。回调函数中四个默认参数，依次为积累<br>值、当前值、当前索引和整个数组。</div>
<div class="code" style="left:109px;top:298px;width:592px;height:123px;padding:8px 0 0 12px"><span class="kw">let</span> <span class="vn">nums</span> <span class="op">=</span> [<span class="nu">1</span>, <span class="nu">2</span>, <span class="nu">3</span>];
<span class="cm">// 多个数的加和</span>
<span class="kw">let</span> <span class="vn">newNums</span> <span class="op">=</span> nums.reduce(<span class="kw">function</span>(<span class="vn">preSum</span>,<span class="vn">curVal</span>,<span class="vn">currentIndex</span>,<span class="vn">array</span>) {
  <span class="kw">return</span> <span class="pa">preSum</span> <span class="op">+</span> <span class="pa">curVal</span>;
}, <span class="nu">0</span>);
console.log(newNums);<span class="cm">//6</span></div>
<div class="txt" style="left:109px;top:437px">不传默认值会怎样?</div>
<div class="txt" style="left:109px;top:469px">不传默认值会自动以第一个元素为初始值，然后从第二个元素开始依次累计。</div>
<div class="txt hb" style="left:109px;top:528px">filter</div>
<div class="txt" style="left:109px;top:560px">参数: 一个函数参数。这个函数接受一个默认参数，就是当前元素。这个作为参数的函数返回值为一个布<br>尔类型，决定元素是否保留。</div>
<div class="txt" style="left:109px;top:610px">filter方法返回值为一个新的数组，这个数组里面包含参数里面所有被保留的项。</div>
<div class="code" style="left:109px;top:644px;width:592px;height:87px;padding:8px 0 0 12px"><span class="kw">let</span> <span class="vn">nums</span> <span class="op">=</span> [<span class="nu">1</span>, <span class="nu">2</span>, <span class="nu">3</span>];
<span class="cm">// 保留奇数项</span>
<span class="kw">let</span> <span class="vn">oddNums</span> <span class="op">=</span> nums.filter(<span class="pa">item</span> <span class="op">=&gt;</span> <span class="pa">item</span> <span class="op">%</span> <span class="nu">2</span>);
console.log(oddNums);</div>
<div class="txt hb" style="left:109px;top:778px">sort</div>
<div class="txt" style="left:109px;top:808px">参数: 一个用于比较的函数，它有两个默认参数，分别是代表比较的两个元素。</div>
<div class="txt" style="left:109px;top:838px">举个例子:</div>

<!-- page 2 content; coords relative to doc (265,31) -->
<div class="code" style="left:910px;top:-10px;width:620px;height:110px;padding:13px 0 0 12px">nums.sort(<span class="kw">function</span>(<span class="vn">a</span>, <span class="vn">b</span>) {
  <span class="kw">if</span>(<span class="pa">a</span> <span class="op">&gt;</span> <span class="pa">b</span>) <span class="kw">return</span> <span class="nu">1</span>;
  <span class="kw">else</span> <span class="kw">if</span>(<span class="pa">a</span> <span class="op">&lt;</span> <span class="pa">b</span>) <span class="kw">return</span> <span class="op">-</span><span class="nu">1</span>;
  <span class="kw">else</span> <span class="kw">if</span>(<span class="pa">a</span> <span class="op">==</span> <span class="pa">b</span>) <span class="kw">return</span> <span class="nu">0</span>;
})</div>
<div class="txt" style="left:909px;top:117px">当比较函数返回值大于0，则 a 在 b 的后面，即a的下标应该比b大。</div>
<div class="txt" style="left:909px;top:146px">反之，则 a 在 b 的后面，即 a 的下标比 b 小。</div>
<div class="txt" style="left:909px;top:177px">整个过程就完成了一次升序的排列。</div>
<div class="txt" style="left:909px;top:208px">当然还有一个需要注意的情况，就是比较函数不传的时候，是如何进行排序的?</div>
<div class="abs" style="left:909px;top:238px;width:5px;height:40px;background:#dcdcdf"></div>
<div class="txt" style="left:928px;top:239px;color:#8a877a;line-height:19.5px">答案是将数字转换为字符串，然后根据字母unicode值进行升序排序，也就是根据字符串的比较规<br>则进行升序排序。</div>
<div class="abs" style="left:875px;top:308px;width:322px;height:49px;border:1.3px solid #de4f4f"></div>
<div class="txt" id="h31" style="left:909px;top:321px;font-size:17px;font-weight:bold;color:#2a2a2a;line-height:22px;letter-spacing:-0.4px;-webkit-text-stroke:0.2px currentColor">31. 能不能实现数组map方法？</div>
<div class="txt" style="left:909px;top:357px">依照 ecma262 草案，实现的map的规范如下:</div>
<div class="abs" style="left:909px;top:385px;width:600px;height:368px;background:#fff"></div>
<div class="spec" id="spec0" style="left:920px;top:382px">When the <b class="sm">map</b> method is called with one or two arguments, the following steps are taken:</div>
<div class="spec" style="left:938px;top:420px">1. Let <i>O</i> be ? <a>ToObject</a>(<b>this</b> value).</div>
<div class="spec" style="left:938px;top:442px">2. Let <i>len</i> be ? <a>LengthOfArrayLike</a>(<i>O</i>).</div>
<div class="spec" style="left:938px;top:464px">3. If <a>IsCallable</a>(<i>callbackfn</i>) is <b>false</b>, throw a <b>TypeError</b> exception.</div>
<div class="spec" style="left:938px;top:486px">4. If <i>thisArg</i> is present, let <i>T</i> be <i>thisArg</i>; else let <i>T</i> be <b>undefined</b>.</div>
<div class="spec" style="left:938px;top:508px">5. Let <i>A</i> be ? <a>ArraySpeciesCreate</a>(<i>O</i>, <i>len</i>).</div>
<div class="spec" style="left:938px;top:530px">6. Let <i>k</i> be 0.</div>
<div class="spec" style="left:938px;top:552px">7. Repeat, while <i>k</i> &lt; <i>len</i></div>
<div class="spec" style="left:972px;top:575px">a. Let <i>Pk</i> be ! <a>ToString</a>(<i>k</i>).</div>
<div class="spec" style="left:972px;top:597px">b. Let <i>kPresent</i> be ? <a>HasProperty</a>(<i>O</i>, <i>Pk</i>).</div>
<div class="spec" style="left:972px;top:619px">c. If <i>kPresent</i> is <b>true</b>, then</div>
<div class="spec" style="left:1007px;top:641px">i. Let <i>kValue</i> be ? <a>Get</a>(<i>O</i>, <i>Pk</i>).</div>
<div class="spec" style="left:1003px;top:663px">ii. Let <i>mappedValue</i> be ? <a>Call</a>(<i>callbackfn</i>, <i>T</i>, « <i>kValue</i>, <i>k</i>, <i>O</i> »).</div>
<div class="spec" style="left:999px;top:685px">iii. Perform ? <a>CreateDataPropertyOrThrow</a>(<i>A</i>, <i>Pk</i>, <i>mappedValue</i>).</div>
<div class="spec" style="left:972px;top:708px">d. Set <i>k</i> to <i>k</i> + 1.</div>
<div class="spec" style="left:938px;top:730px">8. Return <i>A</i>.</div>
<div class="txt" style="left:909px;top:764px">下面根据草案的规定一步步来模拟实现map函数:</div>
<div class="code" style="left:909px;top:799px;width:620px;height:206px;padding:7px 0 0 13px">Array.prototype.map <span class="op">=</span> <span class="kw">function</span>(<span class="vn">callbackFn</span>, <span class="vn">thisArg</span>) {
  <span class="cm">// 处理数组类型异常</span>
  <span class="kw">if</span> (<span class="kw">this</span> <span class="op">===</span> <span class="vn">null</span> <span class="op">||</span> <span class="kw">this</span> <span class="op">===</span> <span class="vn">undefined</span>) {
    <span class="kw">throw</span> <span class="kw">new</span> TypeError(<span class="st">"Cannot read property 'map' of null or undefined"</span>);
  }
  <span class="cm">// 处理回调类型异常</span>
  <span class="kw">if</span> (Object.prototype.toString.call(callbackfn) <span class="op">!=</span> <span class="st">"[object Function]"</span>) {
    <span class="kw">throw</span> <span class="kw">new</span> TypeError(callbackfn <span class="op">+</span> <span class="st">' is not a function'</span>)
  }
  <span class="cm">// 草案中提到要先转换为对象</span></div>
<div class="wm" style="left:1085px;top:1016px">掘金技术社区 @ 用户33914928060</div>

</div>
<div id="bottom">
<svg class="abs" style="left:746px;top:9px" width="13" height="13" viewBox="0 0 13 13"><path d="M8.5 0.5 L0 6.5 L8.5 12.5Z" fill="#1a1a1a"/><rect x="9.3" y="0.5" width="2.7" height="12" fill="#1a1a1a"/></svg>
<svg class="abs" style="left:773px;top:9px" width="8" height="13" viewBox="0 0 8 13"><path d="M7.5 0.5 L0 6.5 L7.5 12.5Z" fill="#1a1a1a"/></svg>
<div class="abs" style="left:792px;top:5px;width:115px;height:20px;background:#fff;border:1px solid #a8a8a8"></div>
<div class="abs" style="left:796px;top:8px;font-size:13px;line-height:14px;color:#111;white-space:nowrap">47 / 269</div>
<svg class="abs" style="left:896px;top:14px" width="7" height="4" viewBox="0 0 7 4"><path d="M0 0 H6 L3 3.5Z" fill="#222"/></svg>
<svg class="abs" style="left:916px;top:9px" width="8" height="13" viewBox="0 0 8 13"><path d="M0 0.5 L7.5 6.5 L0 12.5Z" fill="#1a1a1a"/></svg>
<svg class="abs" style="left:938px;top:9px" width="14" height="13" viewBox="0 0 14 13"><rect x="0.7" y="0.5" width="2.7" height="12" fill="#1a1a1a"/><path d="M5 0.5 L13.5 6.5 L5 12.5Z" fill="#1a1a1a"/></svg>
<svg class="abs" style="left:963px;top:7px" width="17" height="17" viewBox="0 0 17 17">
 <path d="M0.5 10 V1.5 H8" stroke="#3a6fb8" stroke-width="1.2" fill="none"/><path d="M0.5 1.5 H8" stroke="#3a6fb8" stroke-width="2"/>
 <rect x="5.5" y="8.5" width="10" height="7.5" fill="#fff" stroke="#444" stroke-width="1.1"/><path d="M5.5 8.5 H15.5" stroke="#444" stroke-width="2"/>
 <path d="M15.5 4.5 H9.5 M11.5 2 L9 4.5 L11.5 7" stroke="#3c9a6a" stroke-width="1.4" fill="none"/>
</svg>
<svg class="abs" style="left:989px;top:7px" width="17" height="17" viewBox="0 0 17 17">
 <rect x="1.5" y="0.5" width="9" height="7" fill="none" stroke="#c8c8c8" stroke-width="1.1"/>
 <rect x="5.5" y="7.5" width="10" height="8.5" fill="none" stroke="#c8c8c8" stroke-width="1.1"/><path d="M5.5 7.5 H15.5" stroke="#b8c8dc" stroke-width="2"/>
 <path d="M0.5 11.5 H6.5 M4.5 9 L7 11.5 L4.5 14" stroke="#c4d4c8" stroke-width="1.4" fill="none"/>
</svg>
<!-- right view controls -->
<svg class="abs" style="left:1520px;top:8px" width="17" height="14" viewBox="0 0 17 14">
 <ellipse cx="8" cy="7" rx="7" ry="6.2" fill="#fff" stroke="#777" stroke-width="1"/>
 <circle cx="7.5" cy="7.3" r="3.8" fill="#3f74ae"/><circle cx="9.6" cy="5.6" r="2.6" fill="#fff"/>
</svg>
<svg class="abs" style="left:1540px;top:14px" width="6" height="4" viewBox="0 0 6 4"><path d="M0 0 H5.5 L2.75 3Z" fill="#111"/></svg>
<svg class="abs" style="left:1554px;top:9px" width="12" height="15" viewBox="0 0 12 15" shape-rendering="crispEdges">
 <rect x="0.5" y="0.5" width="10" height="13" fill="#fff" stroke="#6e6e6e"/><path d="M2 3.5 H9 M2 6.5 H9 M2 9.5 H9" stroke="#777"/>
</svg>
<svg class="abs" style="left:1580px;top:8px" width="12" height="18" viewBox="0 0 12 18" shape-rendering="crispEdges">
 <rect x="0.5" y="0.5" width="10" height="9" fill="#fff" stroke="#6e6e6e"/><path d="M2 3.5 H9 M2 6.5 H9" stroke="#777"/>
 <path d="M0.5 18 V11.5 H10.5 V18" fill="#fff" stroke="#6e6e6e"/><path d="M2 14.5 H9" stroke="#777"/>
</svg>
<div class="abs" style="left:1601px;top:6px;width:24px;height:20px;background:#c6d4ec"></div>
<svg class="abs" style="left:1605px;top:9px" width="16" height="14" viewBox="0 0 16 14" shape-rendering="crispEdges">
 <rect x="0.5" y="0.5" width="6" height="12" fill="#fff" stroke="#5e5e5e"/><rect x="8.5" y="0.5" width="6" height="12" fill="#fff" stroke="#5e5e5e"/>
 <path d="M2 3.5 H5 M2 6.5 H5 M2 9.5 H5 M10 3.5 H13 M10 6.5 H13 M10 9.5 H13" stroke="#777"/>
</svg>
<svg class="abs" style="left:1631px;top:8px" width="16" height="18" viewBox="0 0 16 18" shape-rendering="crispEdges">
 <path d="M0 0.5 H6.5 V9.5 H0 M9.5 0.5 V9.5 H15 M9.5 0.5 H15" stroke="#6e6e6e" fill="none"/>
 <path d="M0 3.5 H5 M0 6.5 H5 M11 3.5 H15 M11 6.5 H15" stroke="#888"/>
 <path d="M0 11.5 H6.5 V18 M9.5 18 V11.5 H15 M0 14.5 H5 M11 14.5 H15" stroke="#6e6e6e" fill="none"/>
</svg>
<div class="abs" style="left:1674px;top:8px;font-size:12.5px;line-height:14px;color:#222;white-space:nowrap">100%</div>
<svg class="abs" style="left:1731px;top:14px" width="6" height="4" viewBox="0 0 6 4"><path d="M0 0 H5.5 L2.75 3Z" fill="#222"/></svg>
<svg class="abs" style="left:1739px;top:7px" width="17" height="16" viewBox="0 0 17 16">
 <circle cx="8" cy="7.5" r="7" fill="none" stroke="#333" stroke-width="1.1"/><path d="M4.5 7.5 H11.5" stroke="#333" stroke-width="1.2"/>
</svg>
<div class="abs" style="left:1762px;top:14px;width:6px;height:1.2px;background:#333"></div>

</div>
</body></html>
